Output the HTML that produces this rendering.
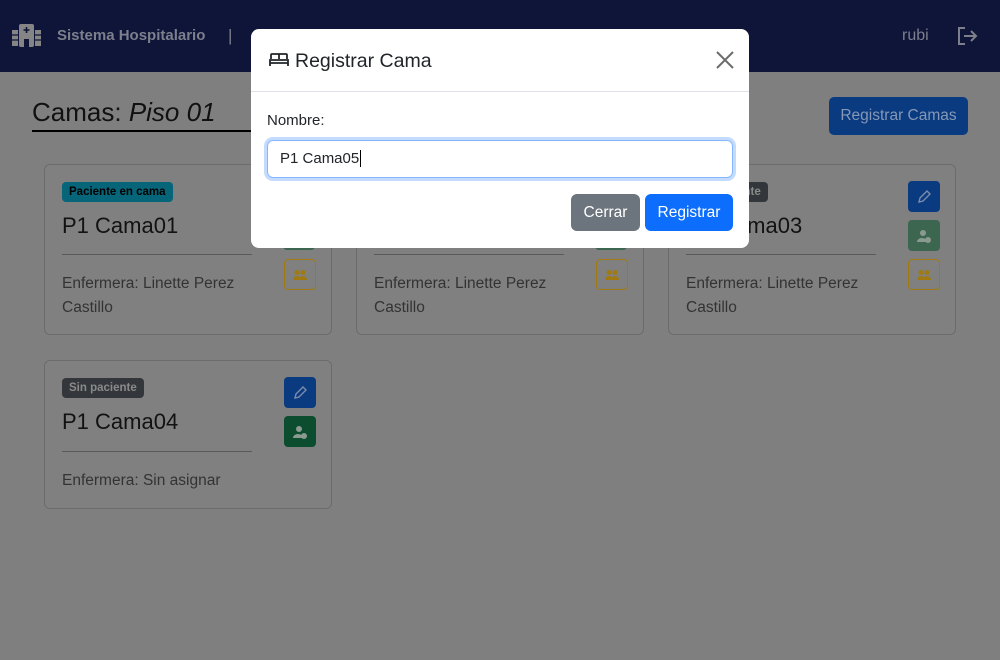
<!DOCTYPE html>
<html><head><meta charset="utf-8"><style>
*{box-sizing:border-box;margin:0;padding:0}
body{width:1000px;height:660px;overflow:hidden;background:#7f7f80;font-family:"Liberation Sans",sans-serif;position:relative}
.nav{position:absolute;left:0;top:0;width:1000px;height:72px;background:#0f1539}
.abs{position:absolute}
.card{position:absolute;border:1px solid #6c6c6c;border-radius:6px;background:#808080}
.badge{position:absolute;left:17px;height:20px;border-radius:4px;font-size:11.5px;font-weight:bold;line-height:20px;padding:0 7px}
.title{position:absolute;left:17px;font-size:22px;color:#121212}
.hr{position:absolute;left:17px;width:190px;height:1px;background:#5a5a5a}
.txt{position:absolute;left:17px;font-size:15.5px;color:#333;line-height:24px}
.btn{position:absolute;width:32px;height:31px;border-radius:4px;display:flex;align-items:center;justify-content:center}
</style></head><body>
<div class="nav">
 <svg class="abs" style="left:12px;top:24px" width="29" height="23" viewBox="0 0 29 23"><rect x="0" y="6" width="6" height="16" fill="#858585"/><rect x="23" y="6" width="6" height="16" fill="#858585"/><rect x="7" y="0" width="15" height="23" fill="#858585" rx="2"/><rect x="12" y="15" width="5" height="8" fill="#0f1539"/><path d="M14.5 3v6M11.5 6h6" stroke="#0f1539" stroke-width="1.6"/><path d="M0 11h6M0 16h6M23 11h6M23 16h6" stroke="#0f1539" stroke-width="1.2"/></svg>
 <div class="abs" style="left:57px;top:27px;font-size:15px;font-weight:bold;color:#7d7f8c">Sistema Hospitalario</div>
 <div class="abs" style="left:228px;top:26px;font-size:17px;color:#7d7f8c">|</div>
 <div class="abs" style="left:902px;top:27px;font-size:16px;color:#7d7f8c">rubi</div>
 <svg class="abs" style="left:958px;top:27px" width="20" height="18" viewBox="0 0 20 18"><path d="M7 1H1v16h6" fill="none" stroke="#7d7f8c" stroke-width="2"/><path d="M6 9h12M13 4l5 5-5 5" fill="none" stroke="#7d7f8c" stroke-width="2"/></svg>
</div>
<div class="abs" style="left:32px;top:97px;font-size:26px;color:#111">Camas: <i>Piso 01</i></div>
<div class="abs" style="left:32px;top:130px;width:220px;height:2px;background:#000"></div>
<div class="abs" style="left:829px;top:97px;width:139px;height:38px;border-radius:5px;background:#0a3a80;color:#8598b5;font-size:15.5px;line-height:38px;text-align:center">Registrar Camas</div>

<!-- cards -->
<div class="card" style="left:44px;top:164px;width:288px;height:171px">
 <div class="badge" style="top:17px;background:#066578;color:#000">Paciente en cama</div>
 <div class="title" style="top:48px">P1 Cama01</div>
 <div class="hr" style="top:89px"></div>
 <div class="txt" style="top:107px">Enfermera: Linette Perez<br>Castillo</div>
 <div class="btn" style="left:239px;top:94px;border:1px solid #a07a10"><svg width="14" height="10"><circle cx="4" cy="2.5" r="2.5" fill="#a07a10"/><circle cx="10" cy="2.5" r="2.5" fill="#a07a10"/><path d="M0 10a4 4 0 0 1 8 0zM6 10a4 4 0 0 1 8 0z" fill="#a07a10"/></svg></div>
</div>
<div class="card" style="left:356px;top:164px;width:288px;height:171px">
 <div class="hr" style="top:89px"></div>
 <div class="txt" style="top:107px">Enfermera: Linette Perez<br>Castillo</div>
 <div class="btn" style="left:239px;top:94px;border:1px solid #a07a10"><svg width="14" height="10"><circle cx="4" cy="2.5" r="2.5" fill="#a07a10"/><circle cx="10" cy="2.5" r="2.5" fill="#a07a10"/><path d="M0 10a4 4 0 0 1 8 0zM6 10a4 4 0 0 1 8 0z" fill="#a07a10"/></svg></div>
</div>
<div class="card" style="left:668px;top:164px;width:288px;height:171px">
 <div class="badge" style="top:17px;background:#33373b;color:#8a8a8a">Sin paciente</div>
 <div class="title" style="top:48px">P1 Cama03</div>
 <div class="hr" style="top:89px"></div>
 <div class="txt" style="top:107px">Enfermera: Linette Perez<br>Castillo</div>
 <div class="btn" style="left:239px;top:16px;background:#0a3a80"><svg width="14" height="14"><path d="M2 12l1-4 7-7 3 3-7 7z" fill="none" stroke="#7c8cab" stroke-width="1.4"/></svg></div>
 <div class="btn" style="left:239px;top:55px;background:#3c6650"><svg width="14" height="14"><circle cx="6" cy="4" r="3" fill="#8a9a90"/><path d="M0 13a5 4 0 0 1 10 0z" fill="#8a9a90"/><circle cx="11" cy="11" r="3" fill="#8a9a90"/></svg></div>
 <div class="btn" style="left:239px;top:94px;border:1px solid #a07a10"><svg width="14" height="10"><circle cx="4" cy="2.5" r="2.5" fill="#a07a10"/><circle cx="10" cy="2.5" r="2.5" fill="#a07a10"/><path d="M0 10a4 4 0 0 1 8 0zM6 10a4 4 0 0 1 8 0z" fill="#a07a10"/></svg></div>
</div>
<div class="card" style="left:44px;top:360px;width:288px;height:149px">
 <div class="badge" style="top:17px;background:#33373b;color:#8a8a8a">Sin paciente</div>
 <div class="title" style="top:48px">P1 Cama04</div>
 <div class="hr" style="top:90px"></div>
 <div class="txt" style="top:108px">Enfermera: Sin asignar</div>
 <div class="btn" style="left:239px;top:16px;background:#0a3a80"><svg width="14" height="14"><path d="M2 12l1-4 7-7 3 3-7 7z" fill="none" stroke="#7c8cab" stroke-width="1.4"/></svg></div>
 <div class="btn" style="left:239px;top:55px;background:#0b4d2e"><svg width="14" height="14"><circle cx="6" cy="4" r="3" fill="#8a9a90"/><path d="M0 13a5 4 0 0 1 10 0z" fill="#8a9a90"/><circle cx="11" cy="11" r="3" fill="#8a9a90"/></svg></div>
</div>
<div class="card" style="left:283px;top:220px;width:32px;height:30px;background:#3c6650;border:none;border-radius:4px"></div>
<div class="card" style="left:595px;top:220px;width:32px;height:30px;background:#3c6650;border:none;border-radius:4px"></div>

<!-- modal -->
<div class="abs" style="left:251px;top:29px;width:498px;height:219px;background:#fff;border-radius:8px">
 <div class="abs" style="left:0;top:62px;width:498px;height:1px;background:#dee2e6"></div>
 <svg class="abs" style="left:18px;top:24px" width="20" height="14" viewBox="0 0 20 14"><path d="M2 6V2a1 1 0 0 1 1-1h14a1 1 0 0 1 1 1v4M1 13V7h18v6M1 10h18M10 1v5" fill="none" stroke="#212529" stroke-width="1.8"/></svg>
 <div class="abs" style="left:44px;top:21px;font-size:19.5px;color:#212529">Registrar Cama</div>
 <svg class="abs" style="left:465px;top:22px" width="18" height="18"><path d="M1 1l16 16M17 1L1 17" stroke="#6c6c6c" stroke-width="2"/></svg>
 <div class="abs" style="left:16px;top:83px;font-size:15px;color:#212529">Nombre:</div>
 <div class="abs" style="left:16px;top:111px;width:466px;height:38px;border:1px solid #86b7fe;border-radius:6px;box-shadow:0 0 0 3px #c2dbfe;font-size:15px;color:#212529;padding:9px 12px">P1 Cama05<span style="border-left:1px solid #000;margin-left:1px"></span></div>
 <div class="abs" style="left:320px;top:165px;width:69px;height:37px;border-radius:6px;background:#6c757d;color:#fff;font-size:15.5px;line-height:37px;text-align:center">Cerrar</div>
 <div class="abs" style="left:394px;top:165px;width:88px;height:37px;border-radius:6px;background:#0d6efd;color:#fff;font-size:15.5px;line-height:37px;text-align:center">Registrar</div>
</div>
</body></html>
